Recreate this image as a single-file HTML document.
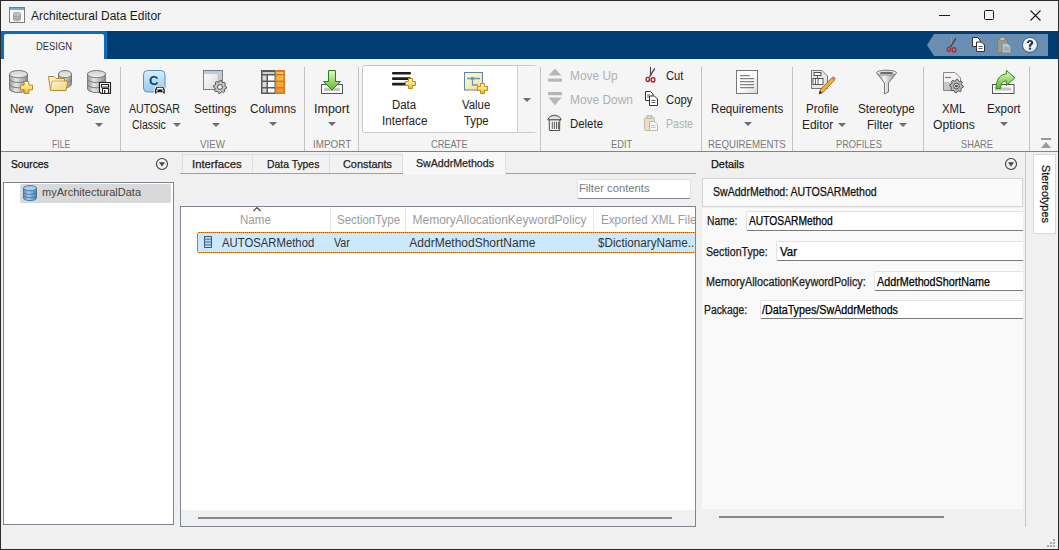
<!DOCTYPE html>
<html><head><meta charset="utf-8"><style>
html,body{margin:0;padding:0;}
body{width:1059px;height:550px;position:relative;overflow:hidden;background:#f0f0f0;font-family:"Liberation Sans",sans-serif;}
.t{position:absolute;white-space:nowrap;transform-origin:0 0;}
svg{overflow:visible;}
</style></head><body>
<div style="position:absolute;left:0px;top:0px;width:1059px;height:31px;background:#f3f3f3;"></div>
<div style="position:absolute;left:0px;top:30px;width:1059px;height:1px;background:#fbfbfb;"></div>
<div style="position:absolute;left:0px;top:31px;width:1059px;height:28px;background:#003d73;"></div>
<div style="position:absolute;left:1px;top:31px;width:106px;height:28px;background:#0b6bbd;"></div>
<div style="position:absolute;left:4px;top:34px;width:100px;height:25px;background:#f5f5f5;border-radius:2px 2px 0 0;"></div>
<div class="t" style="left:36.00px;top:40.69px;font-size:11px;line-height:11px;color:#333;transform:scaleX(0.8531);">DESIGN</div>
<svg style="position:absolute;left:927px;top:34px" width="122" height="22"><path d="M7 0 H121 V22 H7 L0 11 Z" fill="#6a8db2"/></svg>
<div style="position:absolute;left:0px;top:59px;width:1059px;height:92px;background:#f5f5f5;"></div>
<div style="position:absolute;left:0px;top:151px;width:1059px;height:1px;background:#838383;"></div>
<div style="position:absolute;left:0px;top:152px;width:1059px;height:398px;background:#f0f0f0;"></div>
<div class="t" style="left:31.00px;top:9.84px;font-size:12px;line-height:12px;color:#1a1a1a;">Architectural Data Editor</div>
<div style="position:absolute;left:939px;top:15px;width:11px;height:1px;background:#1a1a1a;"></div>
<div style="position:absolute;left:984px;top:10px;width:10px;height:10px;border:1px solid #1a1a1a;border-radius:1.5px;box-sizing:border-box;"></div>
<svg style="position:absolute;left:1030px;top:10px;" width="11" height="11" viewBox="0 0 11 11"><path d="M0.5 0.5 L10.5 10.5 M10.5 0.5 L0.5 10.5" stroke="#1a1a1a" stroke-width="1.1"/></svg>
<div style="position:absolute;left:120px;top:67px;width:1px;height:84px;background:#c2c2c2;"></div>
<div style="position:absolute;left:304px;top:67px;width:1px;height:84px;background:#c2c2c2;"></div>
<div style="position:absolute;left:358px;top:67px;width:1px;height:84px;background:#c2c2c2;"></div>
<div style="position:absolute;left:540px;top:67px;width:1px;height:84px;background:#c2c2c2;"></div>
<div style="position:absolute;left:701px;top:67px;width:1px;height:84px;background:#c2c2c2;"></div>
<div style="position:absolute;left:792px;top:67px;width:1px;height:84px;background:#c2c2c2;"></div>
<div style="position:absolute;left:923px;top:67px;width:1px;height:84px;background:#c2c2c2;"></div>
<div style="position:absolute;left:1029px;top:67px;width:1px;height:84px;background:#c2c2c2;"></div>
<div style="position:absolute;left:362px;top:65px;width:175px;height:68px;background:#fff;border:1px solid #c9c9c9;border-radius:3px;box-sizing:border-box;"></div>
<div style="position:absolute;left:517px;top:66px;width:19px;height:66px;background:#f5f5f5;border-left:1px solid #d0d0d0;border-radius:0 2px 2px 0;"></div>
<div class="t" style="left:10.00px;top:102.84px;font-size:12px;line-height:12px;color:#222;transform:scaleX(0.9583);">New</div>
<div class="t" style="left:45.00px;top:102.84px;font-size:12px;line-height:12px;color:#222;transform:scaleX(0.9864);">Open</div>
<div class="t" style="left:86.00px;top:102.84px;font-size:12px;line-height:12px;color:#222;transform:scaleX(0.8759);">Save</div>
<div class="t" style="left:129.00px;top:102.84px;font-size:12px;line-height:12px;color:#222;transform:scaleX(0.8824);">AUTOSAR</div>
<div class="t" style="left:131.70px;top:119.34px;font-size:12px;line-height:12px;color:#222;transform:scaleX(0.8734);">Classic</div>
<div class="t" style="left:193.50px;top:102.84px;font-size:12px;line-height:12px;color:#222;transform:scaleX(0.9793);">Settings</div>
<div class="t" style="left:249.50px;top:102.84px;font-size:12px;line-height:12px;color:#222;transform:scaleX(0.9725);">Columns</div>
<div class="t" style="left:313.60px;top:102.84px;font-size:12px;line-height:12px;color:#222;transform:scaleX(1.0412);">Import</div>
<div class="t" style="left:392.30px;top:98.84px;font-size:12px;line-height:12px;color:#222;transform:scaleX(0.9528);">Data</div>
<div class="t" style="left:382.00px;top:114.84px;font-size:12px;line-height:12px;color:#222;transform:scaleX(0.9722);">Interface</div>
<div class="t" style="left:462.30px;top:98.84px;font-size:12px;line-height:12px;color:#222;transform:scaleX(0.9463);">Value</div>
<div class="t" style="left:464.00px;top:114.84px;font-size:12px;line-height:12px;color:#222;transform:scaleX(0.9462);">Type</div>
<div class="t" style="left:570.00px;top:69.84px;font-size:12px;line-height:12px;color:#b0b0b0;transform:scaleX(0.9917);">Move Up</div>
<div class="t" style="left:570.00px;top:93.54px;font-size:12px;line-height:12px;color:#b0b0b0;transform:scaleX(0.9937);">Move Down</div>
<div class="t" style="left:570.00px;top:117.54px;font-size:12px;line-height:12px;color:#222;transform:scaleX(0.9510);">Delete</div>
<div class="t" style="left:666.00px;top:69.84px;font-size:12px;line-height:12px;color:#222;transform:scaleX(0.9358);">Cut</div>
<div class="t" style="left:666.00px;top:93.54px;font-size:12px;line-height:12px;color:#222;transform:scaleX(0.9464);">Copy</div>
<div class="t" style="left:666.00px;top:117.54px;font-size:12px;line-height:12px;color:#b0b0b0;transform:scaleX(0.8795);">Paste</div>
<div class="t" style="left:710.50px;top:102.84px;font-size:12px;line-height:12px;color:#222;transform:scaleX(0.9665);">Requirements</div>
<div class="t" style="left:806.40px;top:102.84px;font-size:12px;line-height:12px;color:#222;transform:scaleX(0.9588);">Profile</div>
<div class="t" style="left:801.80px;top:119.34px;font-size:12px;line-height:12px;color:#222;transform:scaleX(0.9936);">Editor</div>
<div class="t" style="left:857.60px;top:102.84px;font-size:12px;line-height:12px;color:#222;transform:scaleX(0.9793);">Stereotype</div>
<div class="t" style="left:866.90px;top:119.34px;font-size:12px;line-height:12px;color:#222;transform:scaleX(0.9663);">Filter</div>
<div class="t" style="left:941.70px;top:102.84px;font-size:12px;line-height:12px;color:#222;transform:scaleX(0.9474);">XML</div>
<div class="t" style="left:932.60px;top:119.34px;font-size:12px;line-height:12px;color:#222;transform:scaleX(1.0097);">Options</div>
<div class="t" style="left:986.80px;top:102.84px;font-size:12px;line-height:12px;color:#222;transform:scaleX(0.9654);">Export</div>
<div class="t" style="left:51.50px;top:138.69px;font-size:11px;line-height:11px;color:#7a7a7a;transform:scaleX(0.7802);">FILE</div>
<div class="t" style="left:200.20px;top:138.69px;font-size:11px;line-height:11px;color:#7a7a7a;transform:scaleX(0.8826);">VIEW</div>
<div class="t" style="left:312.70px;top:138.69px;font-size:11px;line-height:11px;color:#7a7a7a;transform:scaleX(0.8991);">IMPORT</div>
<div class="t" style="left:431.40px;top:138.69px;font-size:11px;line-height:11px;color:#7a7a7a;transform:scaleX(0.8356);">CREATE</div>
<div class="t" style="left:610.70px;top:138.69px;font-size:11px;line-height:11px;color:#7a7a7a;transform:scaleX(0.8486);">EDIT</div>
<div class="t" style="left:708.00px;top:138.69px;font-size:11px;line-height:11px;color:#7a7a7a;transform:scaleX(0.8781);">REQUIREMENTS</div>
<div class="t" style="left:835.60px;top:138.69px;font-size:11px;line-height:11px;color:#7a7a7a;transform:scaleX(0.8419);">PROFILES</div>
<div class="t" style="left:961.00px;top:138.69px;font-size:11px;line-height:11px;color:#7a7a7a;transform:scaleX(0.8443);">SHARE</div>
<svg style="position:absolute;left:95px;top:123px;" width="8" height="4" viewBox="0 0 8 4"><path d="M0 0 H8 L4.0 4 Z" fill="#6e6e6e"/></svg>
<svg style="position:absolute;left:173px;top:123px;" width="8" height="4" viewBox="0 0 8 4"><path d="M0 0 H8 L4.0 4 Z" fill="#6e6e6e"/></svg>
<svg style="position:absolute;left:212px;top:123px;" width="8" height="4" viewBox="0 0 8 4"><path d="M0 0 H8 L4.0 4 Z" fill="#6e6e6e"/></svg>
<svg style="position:absolute;left:269px;top:122px;" width="8" height="4" viewBox="0 0 8 4"><path d="M0 0 H8 L4.0 4 Z" fill="#6e6e6e"/></svg>
<svg style="position:absolute;left:328px;top:122px;" width="8" height="4" viewBox="0 0 8 4"><path d="M0 0 H8 L4.0 4 Z" fill="#6e6e6e"/></svg>
<svg style="position:absolute;left:523px;top:98px;" width="8" height="4" viewBox="0 0 8 4"><path d="M0 0 H8 L4.0 4 Z" fill="#6e6e6e"/></svg>
<svg style="position:absolute;left:744px;top:122px;" width="8" height="4" viewBox="0 0 8 4"><path d="M0 0 H8 L4.0 4 Z" fill="#6e6e6e"/></svg>
<svg style="position:absolute;left:838px;top:123px;" width="8" height="4" viewBox="0 0 8 4"><path d="M0 0 H8 L4.0 4 Z" fill="#6e6e6e"/></svg>
<svg style="position:absolute;left:899px;top:123px;" width="8" height="4" viewBox="0 0 8 4"><path d="M0 0 H8 L4.0 4 Z" fill="#6e6e6e"/></svg>
<svg style="position:absolute;left:1000px;top:122px;" width="8" height="4" viewBox="0 0 8 4"><path d="M0 0 H8 L4.0 4 Z" fill="#6e6e6e"/></svg>
<div class="t" style="left:11.00px;top:158.69px;font-size:11px;line-height:11px;color:#111;transform:scaleX(0.9332);-webkit-text-stroke:0.25px currentColor;">Sources</div>
<svg style="position:absolute;left:156px;top:158px;" width="12" height="12" viewBox="0 0 12 12"><circle cx="6" cy="6" r="5.5" fill="none" stroke="#3c3c3c" stroke-width="1.1"/><path d="M3 4.2 H9 L6 8.6 Z" fill="#474747"/></svg>
<div style="position:absolute;left:3px;top:182px;width:171px;height:343px;background:#fff;border:1px solid #7d8591;box-sizing:border-box;"></div>
<div style="position:absolute;left:20px;top:184px;width:151px;height:19px;background:#d9d9d9;border-radius:2px;"></div>
<div class="t" style="left:42.00px;top:187.49px;font-size:11px;line-height:11px;color:#444;">myArchitecturalData</div>
<div style="position:absolute;left:180px;top:173px;width:516px;height:1px;background:#a0a0a0;"></div>
<div style="position:absolute;left:182px;top:154px;width:71px;height:19px;background:#f2f2f2;border:1px solid #dedede;border-bottom:none;box-sizing:border-box;"></div>
<div style="position:absolute;left:253px;top:154px;width:77px;height:19px;background:#f2f2f2;border:1px solid #dedede;border-bottom:none;border-left:none;box-sizing:border-box;"></div>
<div style="position:absolute;left:330px;top:154px;width:73px;height:19px;background:#f2f2f2;border:1px solid #dedede;border-bottom:none;border-left:none;box-sizing:border-box;"></div>
<div style="position:absolute;left:403px;top:152px;width:103px;height:22px;background:#f8f8f8;border-right:1px solid #e2e2e2;box-sizing:border-box;"></div>
<div class="t" style="left:192.40px;top:158.69px;font-size:11px;line-height:11px;color:#1f1f1f;transform:scaleX(1.0269);-webkit-text-stroke:0.25px currentColor;">Interfaces</div>
<div class="t" style="left:266.60px;top:158.69px;font-size:11px;line-height:11px;color:#1f1f1f;transform:scaleX(0.9440);-webkit-text-stroke:0.25px currentColor;">Data Types</div>
<div class="t" style="left:342.70px;top:158.69px;font-size:11px;line-height:11px;color:#1f1f1f;transform:scaleX(0.9899);-webkit-text-stroke:0.25px currentColor;">Constants</div>
<div class="t" style="left:415.70px;top:157.69px;font-size:11px;line-height:11px;color:#1f1f1f;transform:scaleX(0.9665);-webkit-text-stroke:0.25px currentColor;">SwAddrMethods</div>
<div style="position:absolute;left:577px;top:179px;width:114px;height:20px;background:#fff;border:1px solid #e0e0e0;border-bottom:1px solid #8a8a8a;border-radius:2px;box-sizing:border-box;"></div>
<div class="t" style="left:579.30px;top:182.69px;font-size:11px;line-height:11px;color:#7a7a7a;transform:scaleX(1.0217);">Filter contents</div>
<div style="position:absolute;left:180px;top:206px;width:516px;height:321px;background:#fff;border:1px solid #7d8591;box-sizing:border-box;"></div>
<div style="position:absolute;left:181px;top:207px;width:514px;height:319px;overflow:hidden;">
<div style="position:absolute;left:0px;top:303px;width:514px;height:16px;background:#f0f0f0;"></div>
<div style="position:absolute;left:17px;top:310px;width:474px;height:2px;background:#858585;"></div>
<div style="position:absolute;left:149px;top:0px;width:1px;height:24px;background:#e6e6e6;"></div>
<div style="position:absolute;left:224px;top:0px;width:1px;height:24px;background:#e6e6e6;"></div>
<div style="position:absolute;left:412px;top:0px;width:1px;height:24px;background:#e6e6e6;"></div>
<svg style="position:absolute;left:72px;top:0px;" width="8" height="5" viewBox="0 0 8 5"><path d="M0.5 4 L4 0.6 L7.5 4" fill="none" stroke="#3a3a3a" stroke-width="1.1"/></svg>
<div class="t" style="left:59.20px;top:6.54px;font-size:12px;line-height:12px;color:#9b9b9b;transform:scaleX(0.9625);">Name</div>
<div class="t" style="left:156.00px;top:6.54px;font-size:12px;line-height:12px;color:#9b9b9b;transform:scaleX(0.9545);">SectionType</div>
<div class="t" style="left:231.50px;top:6.54px;font-size:12px;line-height:12px;color:#9b9b9b;">MemoryAllocationKeywordPolicy</div>
<div class="t" style="left:419.50px;top:6.54px;font-size:12px;line-height:12px;color:#9b9b9b;transform:scaleX(0.9715);">Exported XML File</div>
<div style="position:absolute;left:16px;top:25px;width:498px;height:21px;background:#cce8fc;border-radius:2px;"></div>
<div style="position:absolute;left:17px;top:25px;width:510px;height:1px;background:repeating-linear-gradient(90deg,#f7932e 0 1px,#1a7fe0 1px 2px);"></div>
<div style="position:absolute;left:17px;top:45px;width:510px;height:1px;background:repeating-linear-gradient(90deg,#f7932e 0 1px,#1a7fe0 1px 2px);"></div>
<div style="position:absolute;left:16px;top:26px;width:1px;height:19px;background:repeating-linear-gradient(180deg,#f7932e 0 1px,#1a7fe0 1px 2px);"></div>
<div class="t" style="left:41.20px;top:29.54px;font-size:12px;line-height:12px;color:#333;transform:scaleX(0.9427);">AUTOSARMethod</div>
<div class="t" style="left:153.20px;top:29.54px;font-size:12px;line-height:12px;color:#333;transform:scaleX(0.8876);">Var</div>
<div class="t" style="left:228.30px;top:29.54px;font-size:12px;line-height:12px;color:#333;">AddrMethodShortName</div>
<div class="t" style="left:416.50px;top:29.54px;font-size:12px;line-height:12px;color:#333;transform:scaleX(0.9747);">$DictionaryName..</div>
</div>
<div class="t" style="left:710.50px;top:158.69px;font-size:11px;line-height:11px;color:#111;transform:scaleX(0.9881);-webkit-text-stroke:0.25px currentColor;">Details</div>
<svg style="position:absolute;left:1005px;top:158px;" width="12" height="12" viewBox="0 0 12 12"><circle cx="6" cy="6" r="5.5" fill="none" stroke="#3c3c3c" stroke-width="1.1"/><path d="M3 4.2 H9 L6 8.6 Z" fill="#474747"/></svg>
<div style="position:absolute;left:702px;top:208px;width:321px;height:301px;background:#f9f9f9;"></div>
<div style="position:absolute;left:702px;top:178px;width:321px;height:29px;background:#fafafa;border:1px solid #d4d4d4;box-sizing:border-box;"></div>
<div class="t" style="left:713.00px;top:185.84px;font-size:12px;line-height:12px;color:#111;transform:scaleX(0.8806);-webkit-text-stroke:0.25px currentColor;">SwAddrMethod: AUTOSARMethod</div>
<div style="position:absolute;left:746px;top:211px;width:277px;height:20px;background:#fff;border-top:1px solid #e3e3e3;border-left:1px solid #e3e3e3;border-bottom:1px solid #7a7a7a;border-radius:2px 0 0 2px;box-sizing:border-box;"></div>
<div style="position:absolute;left:776px;top:241px;width:247px;height:20px;background:#fff;border-top:1px solid #e3e3e3;border-left:1px solid #e3e3e3;border-bottom:1px solid #7a7a7a;border-radius:2px 0 0 2px;box-sizing:border-box;"></div>
<div style="position:absolute;left:874px;top:271px;width:149px;height:20px;background:#fff;border-top:1px solid #e3e3e3;border-left:1px solid #e3e3e3;border-bottom:1px solid #7a7a7a;border-radius:2px 0 0 2px;box-sizing:border-box;"></div>
<div style="position:absolute;left:760px;top:300px;width:263px;height:19px;background:#fff;border-top:1px solid #e3e3e3;border-left:1px solid #e3e3e3;border-bottom:1px solid #7a7a7a;border-radius:2px 0 0 2px;box-sizing:border-box;"></div>
<div class="t" style="left:706.70px;top:215.44px;font-size:12px;line-height:12px;color:#1a1a1a;transform:scaleX(0.8584);-webkit-text-stroke:0.25px currentColor;">Name:</div>
<div class="t" style="left:748.80px;top:215.44px;font-size:12px;line-height:12px;color:#000;transform:scaleX(0.8558);-webkit-text-stroke:0.25px currentColor;">AUTOSARMethod</div>
<div class="t" style="left:706.00px;top:245.94px;font-size:12px;line-height:12px;color:#1a1a1a;transform:scaleX(0.8890);-webkit-text-stroke:0.25px currentColor;">SectionType:</div>
<div class="t" style="left:780.00px;top:245.94px;font-size:12px;line-height:12px;color:#000;transform:scaleX(0.9551);-webkit-text-stroke:0.25px currentColor;">Var</div>
<div class="t" style="left:706.30px;top:275.94px;font-size:12px;line-height:12px;color:#1a1a1a;transform:scaleX(0.9002);-webkit-text-stroke:0.25px currentColor;">MemoryAllocationKeywordPolicy:</div>
<div class="t" style="left:877.00px;top:275.94px;font-size:12px;line-height:12px;color:#000;transform:scaleX(0.8961);-webkit-text-stroke:0.25px currentColor;">AddrMethodShortName</div>
<div class="t" style="left:704.40px;top:303.94px;font-size:12px;line-height:12px;color:#1a1a1a;transform:scaleX(0.8620);-webkit-text-stroke:0.25px currentColor;">Package:</div>
<div class="t" style="left:762.00px;top:303.94px;font-size:12px;line-height:12px;color:#000;transform:scaleX(0.8941);-webkit-text-stroke:0.25px currentColor;">/DataTypes/SwAddrMethods</div>
<div style="position:absolute;left:719px;top:516px;width:225px;height:2px;background:#858585;"></div>
<div style="position:absolute;left:1025px;top:152px;width:1px;height:375px;background:#c8c8c8;"></div>
<div style="position:absolute;left:1033px;top:154px;width:23px;height:80px;background:#fff;border:1px solid #d8d8d8;box-sizing:border-box;"></div>
<div class="t" style="left:1050.7px;top:165px;font-size:11px;line-height:11px;color:#1a1a1a;transform-origin:0 0;transform:rotate(90deg) scaleX(0.985);-webkit-text-stroke:0.25px currentColor;">Stereotypes</div>
<div style="position:absolute;left:0px;top:0px;width:1059px;height:1px;background:#2b2b2b;"></div>
<div style="position:absolute;left:0px;top:0px;width:1px;height:550px;background:#2b2b2b;"></div>
<div style="position:absolute;left:1058px;top:0px;width:1px;height:550px;background:#2b2b2b;"></div>
<div style="position:absolute;left:0px;top:549px;width:1059px;height:1px;background:#2b2b2b;"></div>
<svg width="0" height="0" style="position:absolute"><defs>
<linearGradient id="gdb" x1="0" y1="0" x2="1" y2="0"><stop offset="0" stop-color="#9a9a9a"/><stop offset="0.35" stop-color="#e6e6e6"/><stop offset="1" stop-color="#8c8c8c"/></linearGradient>
<linearGradient id="gdbtop" x1="0" y1="0" x2="0" y2="1"><stop offset="0" stop-color="#d0d0d0"/><stop offset="1" stop-color="#f0f0f0"/></linearGradient>
<linearGradient id="gplus" x1="0" y1="0" x2="0" y2="1"><stop offset="0" stop-color="#fffbe0"/><stop offset="0.45" stop-color="#fde68a"/><stop offset="1" stop-color="#eab820"/></linearGradient>
<linearGradient id="gfold" x1="0" y1="0" x2="1" y2="1"><stop offset="0" stop-color="#fffbe6"/><stop offset="1" stop-color="#f0d77a"/></linearGradient>
<linearGradient id="gauto" x1="0" y1="0" x2="0" y2="1"><stop offset="0" stop-color="#d8effc"/><stop offset="1" stop-color="#98c9ea"/></linearGradient>
<linearGradient id="gwin" x1="0" y1="0" x2="1" y2="1"><stop offset="0" stop-color="#ffffff"/><stop offset="1" stop-color="#d6d6d6"/></linearGradient>
<linearGradient id="ggreen" x1="0" y1="0" x2="0" y2="1"><stop offset="0" stop-color="#e6f8c0"/><stop offset="1" stop-color="#5fb830"/></linearGradient>
<linearGradient id="gdoc" x1="0" y1="0" x2="1" y2="1"><stop offset="0.5" stop-color="#ffffff"/><stop offset="1" stop-color="#d8d8d8"/></linearGradient>
<linearGradient id="gfun" x1="0" y1="0" x2="1" y2="0"><stop offset="0" stop-color="#8a8a8a"/><stop offset="0.4" stop-color="#f2f2f2"/><stop offset="1" stop-color="#888"/></linearGradient>
<linearGradient id="gtrash" x1="0" y1="0" x2="1" y2="0"><stop offset="0" stop-color="#777"/><stop offset="0.4" stop-color="#e8e8e8"/><stop offset="1" stop-color="#6a6a6a"/></linearGradient>
<linearGradient id="gbdb" x1="0" y1="0" x2="1" y2="0"><stop offset="0" stop-color="#5f8fbf"/><stop offset="0.4" stop-color="#a9cbe8"/><stop offset="1" stop-color="#4f7fb0"/></linearGradient>
<linearGradient id="gvt" x1="0" y1="0" x2="1" y2="1"><stop offset="0" stop-color="#fffce0"/><stop offset="1" stop-color="#f3df88"/></linearGradient>
<radialGradient id="ghelp" cx="0.4" cy="0.35" r="0.7"><stop offset="0" stop-color="#ffffff"/><stop offset="0.7" stop-color="#e8eef5"/><stop offset="1" stop-color="#9fb3c8"/></radialGradient>
</defs></svg>
<svg style="position:absolute;left:9px;top:7px;" width="17" height="16" viewBox="0 0 17 16"><rect x="0.5" y="0.5" width="15" height="15" fill="#fafafa" stroke="#7a7a7a"/><rect x="1" y="1" width="14" height="2" fill="#7fa7c9"/><ellipse cx="8" cy="6.5" rx="3.5" ry="1.3" fill="#ccc" stroke="#888" stroke-width="0.6"/><rect x="4.5" y="6.5" width="7" height="6" fill="#c8c8c8"/><path d="M4.5 6.5 V12.5 A3.5 1.3 0 0 0 11.5 12.5 V6.5" fill="#bdbdbd" stroke="#888" stroke-width="0.6"/><path d="M4.5 8.6 A3.5 1.3 0 0 0 11.5 8.6 M4.5 10.6 A3.5 1.3 0 0 0 11.5 10.6" fill="none" stroke="#888" stroke-width="0.6"/></svg>
<svg style="position:absolute;left:9px;top:70px;" width="19" height="23" viewBox="0 0 19 23"><path d="M0.5 3.6 V18.9 A9.0 3.6 0 0 0 18.5 18.9 V3.6 Z" fill="url(#gdb)" stroke="#7b7b7b" stroke-width="1"/>
<path d="M0.5 8.9 A9.0 3.6 0 0 0 18.5 8.9 M0.5 14.2 A9.0 3.6 0 0 0 18.5 14.2" fill="none" stroke="#7b7b7b" stroke-width="1"/>
<ellipse cx="9.5" cy="4.1" rx="9.0" ry="3.6" fill="url(#gdbtop)" stroke="#7b7b7b" stroke-width="1"/></svg>
<svg style="position:absolute;left:20px;top:81px;" width="13" height="13" viewBox="0 0 13 13"><path d="M4.16 0.5 H8.84 V4.16 H12.5 V8.84 H8.84 V12.5 H4.16 V8.84 H0.5 V4.16 H4.16 Z" fill="url(#gplus)" stroke="#c08a12" stroke-width="1" stroke-linejoin="round"/></svg>
<svg style="position:absolute;left:58px;top:70px;" width="14" height="17" viewBox="0 0 14 17"><path d="M0.5 3.6 V12.9 A6.5 3.6 0 0 0 13.5 12.9 V3.6 Z" fill="url(#gdb)" stroke="#7b7b7b" stroke-width="1"/>
<path d="M0.5 8.9 A6.5 3.6 0 0 0 13.5 8.9 M0.5 14.2 A6.5 3.6 0 0 0 13.5 14.2" fill="none" stroke="#7b7b7b" stroke-width="1"/>
<ellipse cx="7.0" cy="4.1" rx="6.5" ry="3.6" fill="url(#gdbtop)" stroke="#7b7b7b" stroke-width="1"/></svg>
<svg style="position:absolute;left:48px;top:76px;" width="21" height="15" viewBox="0 0 21 15"><path d="M0.5 0.5 H6 L8 2.5 H16.5 V5 H20 L18 14.5 H2.5 Z" fill="url(#gfold)" stroke="#b08a30" stroke-width="1" stroke-linejoin="round"/><path d="M2.5 14.5 L4 5 H20" fill="none" stroke="#c9a040" stroke-width="0.8"/></svg>
<svg style="position:absolute;left:87px;top:70px;" width="19" height="23" viewBox="0 0 19 23"><path d="M0.5 3.6 V18.9 A9.0 3.6 0 0 0 18.5 18.9 V3.6 Z" fill="url(#gdb)" stroke="#7b7b7b" stroke-width="1"/>
<path d="M0.5 8.9 A9.0 3.6 0 0 0 18.5 8.9 M0.5 14.2 A9.0 3.6 0 0 0 18.5 14.2" fill="none" stroke="#7b7b7b" stroke-width="1"/>
<ellipse cx="9.5" cy="4.1" rx="9.0" ry="3.6" fill="url(#gdbtop)" stroke="#7b7b7b" stroke-width="1"/></svg>
<svg style="position:absolute;left:99px;top:82px;" width="13" height="13" viewBox="0 0 13 13"><path d="M0.5 0.5 H11.5 V11.5 H2 L0.5 10 Z" fill="url(#gwin)" stroke="#1e1e1e" stroke-width="1.1"/><rect x="2.5" y="2.5" width="7" height="2.6" fill="#fff" stroke="#1e1e1e" stroke-width="1"/><rect x="3.5" y="6.5" width="6" height="5" fill="#fff" stroke="#1e1e1e" stroke-width="1"/><rect x="5" y="8" width="1.3" height="3.5" fill="#333"/></svg>
<svg style="position:absolute;left:143px;top:70px;" width="24" height="24" viewBox="0 0 24 24"><rect x="0.5" y="0.5" width="21.5" height="21.5" rx="4" fill="url(#gauto)" stroke="#5b8fc2" stroke-width="1"/><text x="6" y="15.3" font-family="Liberation Sans" font-weight="bold" font-size="13" fill="#123f70">C</text><path d="M11.3 23.8 V19.3 L13 16 H20.8 L22.5 19.3 V23.8 Z" fill="#fff"/><path d="M12 23.5 V19.5 L13.5 16.7 H20.3 L21.8 19.5 V23.5 H20.2 V22.3 H13.6 V23.5 Z" fill="#1b1b1b"/><path d="M14.2 17.7 H19.6 L20.5 19.5 H13.3 Z" fill="#fff"/><rect x="13" y="20.2" width="1.8" height="1.2" fill="#fff"/><rect x="19" y="20.2" width="1.8" height="1.2" fill="#fff"/></svg>
<svg style="position:absolute;left:203px;top:70px;" width="25" height="25" viewBox="0 0 25 25"><rect x="0.5" y="0.5" width="19" height="19" fill="url(#gwin)" stroke="#7d7d7d"/><rect x="1" y="1" width="18" height="3" fill="#a9d0f0"/><rect x="14.5" y="4" width="4.5" height="10" fill="#c8c8c8"/><polygon points="23.60,17.00 23.47,18.29 21.76,18.97 21.28,19.86 21.67,21.67 20.67,22.49 18.97,21.76 18.00,22.05 17.00,23.60 15.71,23.47 15.03,21.76 14.14,21.28 12.33,21.67 11.51,20.67 12.24,18.97 11.95,18.00 10.40,17.00 10.53,15.71 12.24,15.03 12.72,14.14 12.33,12.33 13.33,11.51 15.03,12.24 16.00,11.95 17.00,10.40 18.29,10.53 18.97,12.24 19.86,12.72 21.67,12.33 22.49,13.33 21.76,15.03 22.05,16.00" fill="#c4c4c4" stroke="#4a4a4a" stroke-width="0.9" stroke-linejoin="round"/><circle cx="17" cy="17" r="2.4" fill="#fff" stroke="#4a4a4a" stroke-width="1"/></svg>
<svg style="position:absolute;left:261px;top:70px;" width="24" height="24" viewBox="0 0 24 24"><rect x="0" y="0" width="15" height="24" fill="#5a5a5a"/><rect x="1.5" y="2" width="12" height="2" fill="#cfcfcf"/><rect x="1.5" y="5.5" width="4" height="5" fill="#d8d8d8"/><rect x="7" y="5.5" width="6.5" height="5" fill="#fff"/><rect x="1.5" y="12" width="4" height="5" fill="#d8d8d8"/><rect x="7" y="12" width="6.5" height="5" fill="#fff"/><rect x="1.5" y="18.5" width="4" height="4" fill="#d8d8d8"/><rect x="7" y="18.5" width="6.5" height="4" fill="#fff"/><rect x="14" y="0" width="10" height="24" fill="#d9782a"/><rect x="15.5" y="2" width="7" height="2" fill="#f6c453"/><rect x="15.5" y="5.5" width="7" height="5" fill="#f5b93e"/><rect x="15.5" y="12" width="7" height="5" fill="#f3a934"/><rect x="15.5" y="18.5" width="7" height="4" fill="#f19a2c"/></svg>
<svg style="position:absolute;left:321px;top:70px;" width="23" height="24" viewBox="0 0 23 24"><rect x="0.5" y="14.5" width="21" height="9" fill="#fafafa" stroke="#555"/><rect x="3" y="18" width="16" height="3" fill="#c4c4c4"/><path d="M7.5 0.5 H14.5 V11.5 H19.5 L11 20 L2.5 11.5 H7.5 Z" fill="url(#ggreen)" stroke="#2f7d1e" stroke-width="1" stroke-linejoin="round"/></svg>
<svg style="position:absolute;left:392px;top:72px;" width="25" height="17" viewBox="0 0 25 17"><rect x="0" y="0" width="19" height="2.6" rx="1" fill="#1e1e1e"/><rect x="0" y="5.3" width="19" height="2.6" rx="1" fill="#1e1e1e"/><rect x="0" y="10.8" width="15" height="2.6" rx="1" fill="#1e1e1e"/></svg>
<svg style="position:absolute;left:405px;top:78px;" width="11" height="11" viewBox="0 0 11 11"><path d="M3.52 0.5 H7.48 V3.52 H10.5 V7.48 H7.48 V10.5 H3.52 V7.48 H0.5 V3.52 H3.52 Z" fill="url(#gplus)" stroke="#c08a12" stroke-width="1" stroke-linejoin="round"/></svg>
<svg style="position:absolute;left:464px;top:72px;" width="19" height="19" viewBox="0 0 19 19"><rect x="0.5" y="0.5" width="18" height="17.5" fill="url(#gvt)" stroke="#5d86b5"/><path d="M3 6.5 H16 M8.5 6.5 V13 H14" fill="none" stroke="#6f98c8" stroke-width="1.3"/><rect x="7" y="5" width="3" height="3" fill="#6f98c8"/></svg>
<svg style="position:absolute;left:477px;top:83px;" width="11" height="11" viewBox="0 0 11 11"><path d="M3.52 0.5 H7.48 V3.52 H10.5 V7.48 H7.48 V10.5 H3.52 V7.48 H0.5 V3.52 H3.52 Z" fill="url(#gplus)" stroke="#c08a12" stroke-width="1" stroke-linejoin="round"/></svg>
<svg style="position:absolute;left:548px;top:68px;" width="14" height="14" viewBox="0 0 14 14"><path d="M7 0.5 L13.5 7.5 H0.5 Z" fill="#b7b7b7"/><rect x="0" y="10.5" width="14" height="3.2" fill="#b7b7b7"/></svg>
<svg style="position:absolute;left:548px;top:92px;" width="14" height="14" viewBox="0 0 14 14"><rect x="0" y="0" width="14" height="3.2" fill="#b7b7b7"/><path d="M0.5 5.5 H13.5 L7 13.3 Z" fill="#b7b7b7"/></svg>
<svg style="position:absolute;left:547px;top:115px;" width="16" height="16" viewBox="0 0 16 16"><path d="M2.2 4.6 H12.8 L12.6 15.5 H2.4 Z" fill="#f4f4f4" stroke="#505050" stroke-width="1"/><path d="M5.3 6.8 V14 M7.4 6.8 V14 M9.5 6.8 V14 M11.4 6.8 V14" stroke="#5a5a5a" stroke-width="1"/><path d="M0.8 4.8 C1.5 1.6 5 0.3 7.5 0.3 C10 0.3 13.5 1.6 14.2 4.8 Z" fill="url(#gdbtop)" stroke="#444" stroke-width="1"/></svg>
<svg style="position:absolute;left:645px;top:67px;" width="11" height="16" viewBox="0 0 11 16"><path d="M5.5 0 V9" stroke="#444" stroke-width="1.1"/><path d="M9.8 1.4 L4.4 10" stroke="#444" stroke-width="1.3"/><ellipse cx="2.8" cy="12.4" rx="1.7" ry="2.1" fill="none" stroke="#b5121f" stroke-width="1.3"/><ellipse cx="8" cy="12.8" rx="1.9" ry="2.2" fill="none" stroke="#b5121f" stroke-width="1.3"/></svg>
<svg style="position:absolute;left:645px;top:91px;" width="13" height="15" viewBox="0 0 13 15"><path d="M0.5 0.5 H5.5 L8 3 V9.5 H0.5 Z" fill="#fff" stroke="#333"/><path d="M1.8 4 H5 M1.8 6 H5" stroke="#333" stroke-width="0.8"/><path d="M4.5 5 H9.5 L12.5 8 V14.5 H4.5 Z" fill="#fff" stroke="#333"/><path d="M6.5 9.5 H10.5 M6.5 11.5 H10.5" stroke="#333" stroke-width="0.8"/></svg>
<svg style="position:absolute;left:644px;top:115px;" width="15" height="16" viewBox="0 0 15 16"><rect x="0.5" y="2.5" width="10" height="13" rx="1" fill="#e8dccb" stroke="#c9b9a3"/><rect x="3" y="0.5" width="5" height="3" fill="#d8d8d8" stroke="#b5b5b5" stroke-width="0.8"/><path d="M5.5 6.5 H10.5 L13.5 9.5 V15.5 H5.5 Z" fill="#f4f4f4" stroke="#b8b8b8"/><path d="M7.2 10.5 H11.5 M7.2 12.5 H11.5" stroke="#bbb" stroke-width="0.8"/></svg>
<svg style="position:absolute;left:736px;top:70px;" width="23" height="25" viewBox="0 0 23 25"><rect x="0.5" y="0.5" width="21" height="23" fill="url(#gdoc)" stroke="#777"/><path d="M4 5.7 H14 M4 8.7 H18 M4 11.7 H18 M4 14.7 H18 M4 17.7 H18" stroke="#555" stroke-width="0.9"/></svg>
<svg style="position:absolute;left:811px;top:70px;" width="25" height="25" viewBox="0 0 25 25"><path d="M0.5 0.5 H11 L16.5 6 V18.5 H0.5 Z" fill="#e8e8e8" stroke="#777"/><rect x="3" y="2.5" width="7" height="3" fill="#fff" stroke="#444" stroke-width="0.9"/><path d="M6.5 5.5 V8" stroke="#444" stroke-width="0.8"/><rect x="2" y="8.5" width="10" height="6" fill="#fff" stroke="#444" stroke-width="0.9"/><path d="M4.5 8.5 V14.5 M7 8.5 V14.5" stroke="#444" stroke-width="0.8"/><path d="M8 24 L9.2 20 L21 7.5 L23.6 10 L11.8 22.6 Z" fill="#f0b040" stroke="#8a5a10" stroke-width="0.8"/><path d="M21 7.5 L22.3 6.2 L24.9 8.7 L23.6 10 Z" fill="#e85a8a"/><path d="M8 24 L9 20.8 L11 22.7 Z" fill="#222"/></svg>
<svg style="position:absolute;left:876px;top:70px;" width="21" height="25" viewBox="0 0 21 25"><path d="M0.5 2.8 A10 2.6 0 0 1 20.5 2.8 L12.5 13 V22 L8.5 23.8 V13 Z" fill="url(#gfun)" stroke="#777" stroke-width="1" stroke-linejoin="round"/><ellipse cx="10.5" cy="2.8" rx="10" ry="2.4" fill="#f0f0f0" stroke="#888" stroke-width="0.8"/><ellipse cx="10.5" cy="3" rx="7" ry="1.3" fill="#6a6a6a"/></svg>
<svg style="position:absolute;left:943px;top:72px;" width="22" height="21" viewBox="0 0 22 21"><path d="M0.5 0.5 H12 L17.5 6 V18.5 H0.5 Z" fill="#f3f3f3" stroke="#888"/><path d="M2 5.5 H8" stroke="#e4572e" stroke-width="1.2"/><rect x="1" y="10" width="16" height="8" fill="#c8c8c8"/><polygon points="20.30,14.00 20.17,15.33 18.40,16.03 17.91,16.95 18.31,18.81 17.28,19.65 15.53,18.90 14.53,19.20 13.50,20.80 12.17,20.67 11.47,18.90 10.55,18.41 8.69,18.81 7.85,17.78 8.60,16.03 8.30,15.03 6.70,14.00 6.83,12.67 8.60,11.97 9.09,11.05 8.69,9.19 9.72,8.35 11.47,9.10 12.47,8.80 13.50,7.20 14.83,7.33 15.53,9.10 16.45,9.59 18.31,9.19 19.15,10.22 18.40,11.97 18.70,12.97" fill="#b8b8b8" stroke="#4a4a4a" stroke-width="0.9" stroke-linejoin="round"/><circle cx="13.5" cy="14" r="2.8" fill="#fff" stroke="#4a4a4a" stroke-width="1"/><circle cx="13.5" cy="14" r="1.6" fill="#555"/></svg>
<svg style="position:absolute;left:992px;top:70px;" width="24" height="25" viewBox="0 0 24 25"><rect x="0.5" y="14.5" width="21.5" height="9" fill="#fafafa" stroke="#555"/><rect x="3" y="17.5" width="16" height="3" fill="#c4c4c4"/><path d="M4 18.6 C4 10 8 4 14.3 4 V0.4 L23 7.8 L14.3 15.5 V10.8 C11 10.8 9 13 8.5 18.6 Z" fill="url(#ggreen)" stroke="#2f8a1e" stroke-width="1" stroke-linejoin="round"/></svg>
<svg style="position:absolute;left:946px;top:37px;" width="11" height="16" viewBox="0 0 11 16"><path d="M5.5 0 V9" stroke="#9a9a9a" stroke-width="1.1"/><path d="M9.8 1.4 L4.4 10" stroke="#3a3a3a" stroke-width="1.3"/><ellipse cx="2.8" cy="12.4" rx="1.7" ry="2.1" fill="none" stroke="#c0202a" stroke-width="1.3"/><ellipse cx="8" cy="12.8" rx="1.9" ry="2.2" fill="none" stroke="#c0202a" stroke-width="1.3"/></svg>
<svg style="position:absolute;left:972px;top:37px;" width="14" height="16" viewBox="0 0 14 16"><path d="M0.5 0.5 H5.5 L8 3 V9.5 H0.5 Z" fill="#fff" stroke="#333"/><path d="M4.5 5 H9.5 L12.5 8 V14.5 H4.5 Z" fill="#fff" stroke="#333"/><path d="M6.5 9.5 H10.5 M6.5 11.5 H10.5" stroke="#333" stroke-width="0.8"/></svg>
<svg style="position:absolute;left:997px;top:37px;" width="14" height="16" viewBox="0 0 14 16"><rect x="0.5" y="2.5" width="10" height="13" rx="1" fill="#9a9a8a" stroke="#7d7d70"/><rect x="3" y="0.5" width="5" height="3" fill="#bbb" stroke="#888" stroke-width="0.8"/><path d="M5.5 6.5 H10.5 L13.5 9.5 V15.5 H5.5 Z" fill="#b8c4d0" stroke="#8f9aa5"/><path d="M7 11 H12 M7 13 H12" stroke="#7a8590" stroke-width="0.8"/></svg>
<svg style="position:absolute;left:1022px;top:37px;" width="16" height="16" viewBox="0 0 16 16"><circle cx="8" cy="8" r="7.5" fill="url(#ghelp)" stroke="#2a4a6a" stroke-width="0.8"/><path d="M4.9 6 C4.9 3.9 6.3 2.9 8 2.9 C10 2.9 11.3 4 11.3 5.7 C11.3 7.4 9.8 7.8 9.1 8.7 V9.7 H6.9 V8.3 C6.9 6.9 9 6.5 9 5.7 C9 5.1 8.6 4.7 8 4.7 C7.3 4.7 7 5.2 7 6 Z" fill="#1f3550"/><rect x="6.9" y="10.6" width="2.2" height="2" fill="#1f3550"/></svg>
<svg style="position:absolute;left:1040px;top:138px;" width="12" height="11" viewBox="0 0 12 11"><rect x="1" y="0" width="10" height="2" fill="#9a9a9a"/><path d="M6 4 L11 10 H1 Z" fill="#9a9a9a"/></svg>
<svg style="position:absolute;left:23px;top:185px;" width="14" height="16" viewBox="0 0 14 16"><path d="M0.5 3 V13 A6.5 2.6 0 0 0 13.5 13 V3 Z" fill="url(#gbdb)" stroke="#4a76a6" stroke-width="1"/><path d="M0.5 6.8 A6.5 2.6 0 0 0 13.5 6.8 M0.5 10 A6.5 2.6 0 0 0 13.5 10" fill="none" stroke="#4a76a6" stroke-width="0.9"/><ellipse cx="7" cy="3.2" rx="6.5" ry="2.6" fill="#a9cdee" stroke="#4a76a6" stroke-width="1"/></svg>
<svg style="position:absolute;left:204px;top:236px;" width="8" height="12" viewBox="0 0 8 12"><rect x="0.5" y="0.5" width="7" height="11" fill="#b8daf5" stroke="#3f5f80" stroke-width="1"/><path d="M0.5 3.2 H7.5 M0.5 6 H7.5 M0.5 8.8 H7.5" stroke="#3f5f80" stroke-width="0.9"/></svg>
<div style="position:absolute;left:1053px;top:539px;width:2px;height:2px;background:#a8a8a8;"></div>
<div style="position:absolute;left:1050px;top:542px;width:2px;height:2px;background:#a8a8a8;"></div>
<div style="position:absolute;left:1053px;top:542px;width:2px;height:2px;background:#a8a8a8;"></div>
<div style="position:absolute;left:1047px;top:545px;width:2px;height:2px;background:#a8a8a8;"></div>
<div style="position:absolute;left:1050px;top:545px;width:2px;height:2px;background:#a8a8a8;"></div>
<div style="position:absolute;left:1053px;top:545px;width:2px;height:2px;background:#a8a8a8;"></div>
</body></html>
